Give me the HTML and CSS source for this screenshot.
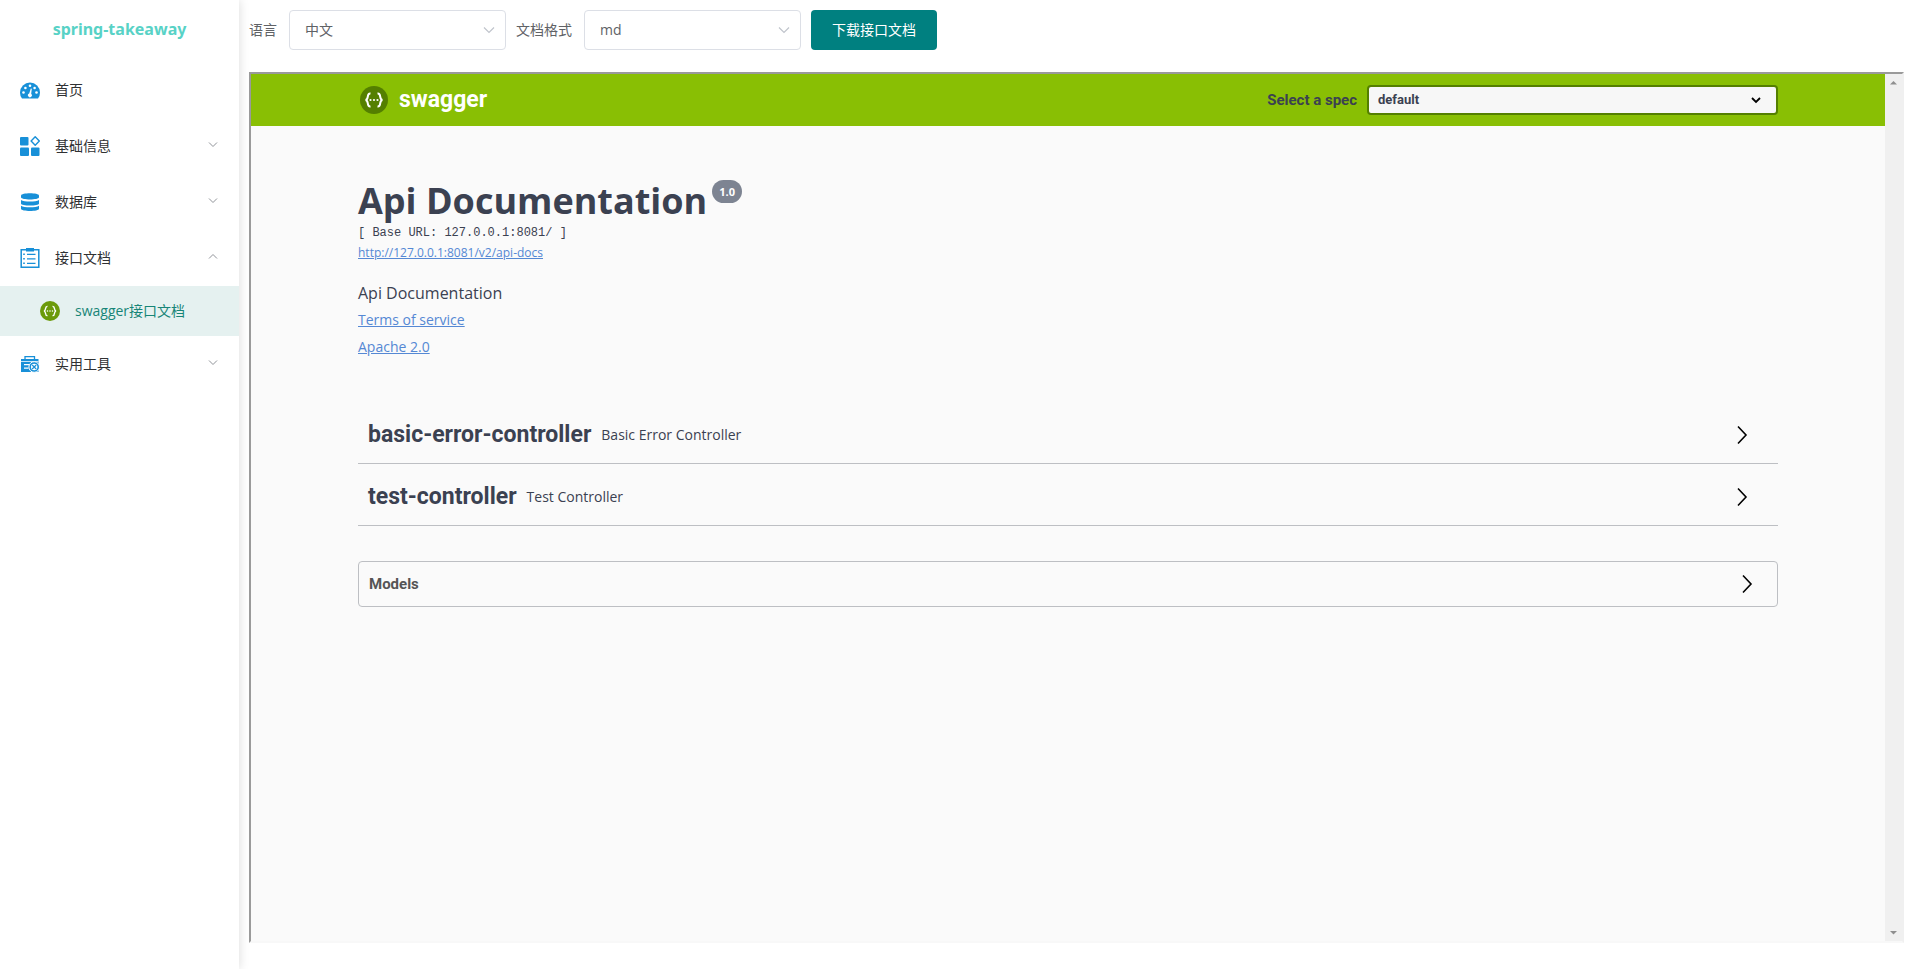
FILE: index.html
```html
<!DOCTYPE html>
<html lang="zh-CN">
<head>
<meta charset="utf-8">
<title>spring-takeaway</title>
<link rel="stylesheet" href="styles.css">
</head>
<body>
<div class="app">
  <aside class="sidebar">
    <h1 class="brand">spring-takeaway</h1>
    <nav class="menu">
      <a class="menu-item" href="#home">
        <svg class="menu-icon" viewBox="0 0 20 20"><path fill="#1890d8" d="M2 18.500Q0 16.500 0 12.500a10 10 0 0 1 20 0q0 4-2 6z"/><g fill="#fff"><circle cx="3.500" cy="12.500" r="1.300"/><circle cx="5.400" cy="8" r="1.300"/><circle cx="10" cy="5.800" r="1.300"/><circle cx="14.600" cy="8" r="1.300"/><circle cx="16.500" cy="12.500" r="1.300"/><path d="m10.800 8.500 1 .2-.6 5a2 2 0 1 1-2-.3z"/></g></svg>
        <span class="menu-text">首页</span>
      </a>
      <a class="menu-item" href="#base">
        <svg class="menu-icon" viewBox="0 0 20 20"><g fill="#1890d8"><rect y="1" width="8.500" height="8.500" rx="1"/><rect y="11.500" width="9" height="8.500" rx="1"/><rect x="11" y="11.500" width="8.500" height="8.500" rx="1"/></g><path fill="none" stroke="#1890d8" stroke-width="1.400" stroke-linejoin="round" d="M15.200 .8 19.300 5l-4.100 4.200L11.100 5z"/></svg>
        <span class="menu-text">基础信息</span>
        <svg class="menu-arrow" viewBox="0 0 12 12"><path d="M2 3.500 6 7.500 10 3.500"/></svg>
      </a>
      <a class="menu-item" href="#database">
        <svg class="menu-icon" viewBox="0 0 20 20"><g fill="#1890d8"><path d="M1 3.500C1 .4 19 .4 19 3.500V5.300c0 2.900-18 2.900-18 0z"/><path d="M1 8c3 2 15 2 18 0v3.500c0 2.800-18 2.800-18 0z"/><path d="M1 13.800c3 2 15 2 18 0v2.900c0 3-18 3-18 0z"/></g></svg>
        <span class="menu-text">数据库</span>
        <svg class="menu-arrow" viewBox="0 0 12 12"><path d="M2 3.500 6 7.500 10 3.500"/></svg>
      </a>
      <a class="menu-item" href="#docs">
        <svg class="menu-icon" viewBox="0 0 20 20"><path fill="none" stroke="#1890d8" stroke-width="1.500" d="M1.200 1.800h17.600v17.400H1.200z"/><path fill="#1890d8" d="M6 0h8v3.500H6zM3.200 5.500h1.600v1.600H3.200zM3.200 10h1.600v1.600H3.200zM3.200 14.500h1.600v1.600H3.200zM7 5.700h8.500v1.200H7zM7 10.200h8.500v1.200H7zM7 14.700h8.500v1.200H7z"/></svg>
        <span class="menu-text">接口文档</span>
        <svg class="menu-arrow" viewBox="0 0 12 12"><path d="M2 7.500 6 3.500 10 7.500"/></svg>
      </a>
      <a class="menu-item menu-item-sub" href="#swagger">
        <svg class="menu-icon" viewBox="0 0 28 28"><circle cx="14" cy="14" r="14" fill="#6b9a0a"/><path class="braces" d="M10.500 7.500C6 7 9.500 13.500 5.500 14c4 .5.500 7 5 6.500M17.500 7.500c4.500-.5 1 6 5 6.500-4 .5-.5 7-5 6.500"/><g fill="#fff"><circle cx="10.500" cy="14" r="1.100"/><circle cx="14" cy="14" r="1.100"/><circle cx="17.500" cy="14" r="1.100"/></g></svg>
        <span class="menu-text">swagger接口文档</span>
      </a>
      <a class="menu-item" href="#tools">
        <svg class="menu-icon" viewBox="0 0 20 20"><path fill="#1890d8" d="M1 5h17.500v13H1z"/><path fill="none" stroke="#1890d8" stroke-width="1.300" d="M5 5V2.700h9.500V5"/><path fill="#fff" d="M1 7h17.500v.8H1zM4 10h5v1.300H4zM4 13.500h4.500v1.300H4z"/><circle cx="14.200" cy="13" r="5.300" fill="#1890d8" stroke="#fff"/><circle cx="14.200" cy="13" r="3.200" fill="#fff"/><path fill="none" stroke="#1890d8" stroke-width="1.200" d="m12.200 11 4 4m0-4-4 4"/></svg>
        <span class="menu-text">实用工具</span>
        <svg class="menu-arrow" viewBox="0 0 12 12"><path d="M2 3.500 6 7.500 10 3.500"/></svg>
      </a>
    </nav>
  </aside>

  <main class="main">
    <form class="toolbar">
      <div class="field">
        <label for="lang">语言</label>
        <div class="picker">
          <select id="lang"><option>中文</option></select>
          <svg class="picker-arrow" viewBox="0 0 14 14"><path d="M2 4.500 7 9.500 12 4.500"/></svg>
        </div>
      </div>
      <div class="field">
        <label for="format">文档格式</label>
        <div class="picker">
          <select id="format"><option>md</option></select>
          <svg class="picker-arrow" viewBox="0 0 14 14"><path d="M2 4.500 7 9.500 12 4.500"/></svg>
        </div>
      </div>
      <button class="download" type="button">下载接口文档</button>
    </form>

    <section class="frame">
      <div class="swagger">
        <header class="topbar">
          <div class="wrap topbar-row">
            <a class="logo" href="#top">
              <svg class="logo-mark" viewBox="0 0 28 28"><circle cx="14" cy="14" r="14" fill="#547f00"/><path class="braces" d="M10.500 7.500C6 7 9.500 13.500 5.500 14c4 .5.500 7 5 6.500M17.500 7.500c4.500-.5 1 6 5 6.500-4 .5-.5 7-5 6.500"/><g fill="#fff"><circle cx="10.500" cy="14" r="1.100"/><circle cx="14" cy="14" r="1.100"/><circle cx="17.500" cy="14" r="1.100"/></g></svg>
              <span>swagger</span>
            </a>
            <div class="spec">
              <label for="spec">Select a spec</label>
              <div class="spec-picker">
                <select id="spec"><option>default</option></select>
                <svg class="spec-arrow" viewBox="0 0 12 12"><path d="M2 4 6 8 10 4"/></svg>
              </div>
            </div>
          </div>
        </header>
        <div class="wrap">
          <div class="info">
            <h2 class="title">Api Documentation<span class="version">1.0</span></h2>
            <p class="base-url">[ Base URL: 127.0.0.1:8081/ ]</p>
            <a class="docs-link" href="#api-docs">http://127.0.0.1:8081/v2/api-docs</a>
            <p class="description">Api Documentation</p>
            <a class="info-link" href="#terms">Terms of service</a>
            <a class="info-link" href="#license">Apache 2.0</a>
          </div>
          <button class="tag" type="button">
            <span class="tag-name">basic-error-controller</span>
            <span class="tag-note">Basic Error Controller</span>
            <svg class="chevron" viewBox="0 0 20 20"><path d="M6 1.500 14 10 6 18.500"/></svg>
          </button>
          <button class="tag" type="button">
            <span class="tag-name">test-controller</span>
            <span class="tag-note">Test Controller</span>
            <svg class="chevron" viewBox="0 0 20 20"><path d="M6 1.500 14 10 6 18.500"/></svg>
          </button>
          <button class="models" type="button">
            <span>Models</span>
            <svg class="chevron" viewBox="0 0 20 20"><path d="M6 1.500 14 10 6 18.500"/></svg>
          </button>
        </div>
      </div>
      <div class="scroll" aria-hidden="true">
        <svg viewBox="0 0 17 17"><path d="M5 10.500 8.500 7l3.500 3.500z"/></svg>
        <svg viewBox="0 0 17 17"><path d="M5 7h7l-3.500 3.500z"/></svg>
      </div>
    </section>
  </main>
</div>
</body>
</html>
```
FILE: styles.css
```css
* { box-sizing: border-box; }
body {
  margin: 0;
  background: #fff;
  color: #606266;
  font: 14px/20px "Open Sans", "Noto Sans CJK SC", sans-serif;
}
button, select { font: inherit; color: inherit; margin: 0; }
h1, h2, p { margin: 0; }
.app { display: flex; min-height: 100vh; }

.sidebar {
  flex: none;
  width: 239px;
  background: #fff;
  box-shadow: 0 0 10px rgba(0, 0, 0, .15);
}
.brand {
  padding: 18px 0;
  margin-bottom: 3px;
  color: #58d2c6;
  font: 700 16px/23px "Noto Sans", sans-serif;
  text-align: center;
}
.menu-item {
  display: flex;
  align-items: center;
  height: 56px;
  padding: 0 20px;
  color: #303133;
  text-decoration: none;
}
.menu-item-sub {
  height: 50px;
  padding-left: 40px;
  background: #e5f1f0;
  color: #178577;
}
.menu-icon { flex: none; width: 20px; height: 20px; margin-right: 15px; }
.menu-text { flex: 1; }
.menu-arrow { width: 12px; height: 12px; margin-bottom: 3px; }
.menu-arrow path { fill: none; stroke: #909399; }
.braces { fill: none; stroke: #fff; stroke-width: 2; }

.main {
  flex: 1;
  display: flex;
  flex-direction: column;
  gap: 22px;
  padding: 10px 16px 26px 10px;
}
.toolbar { display: flex; gap: 10px; }
.field { display: flex; align-items: center; gap: 12px; }
.picker { position: relative; width: 217px; }
.picker select {
  display: block;
  width: 100%;
  height: 40px;
  padding: 0 30px 0 15px;
  border: 1px solid #dcdfe6;
  border-radius: 4px;
  background: #fff;
  appearance: none;
}
.picker-arrow { position: absolute; right: 10px; top: 13px; width: 14px; height: 14px; }
.picker-arrow path { fill: none; stroke: #c0c4cc; stroke-width: 1.200; }
.download {
  height: 40px;
  padding: 0 21px;
  border: 0;
  border-radius: 4px;
  background: #008080;
  color: #fff;
}

.frame {
  flex: 1;
  display: flex;
  border: 2px solid #f0f0f0;
  border-top-color: #9a9a9a;
  border-left-color: #9a9a9a;
  border-bottom-color: #f8f8f8;
  background: #fafafa;
}
.swagger { flex: 1; color: #3b4151; }
.scroll {
  width: 17px;
  display: flex;
  flex-direction: column;
  justify-content: space-between;
  background: #f0f0f0;
}
.scroll svg { width: 17px; height: 17px; fill: #8f8f8f; }
.wrap { max-width: 1460px; margin: 0 auto; padding: 0 20px; }
.topbar { background: #89bf04; }
.topbar-row { display: flex; align-items: center; justify-content: space-between; height: 52px; }
.logo {
  display: flex;
  align-items: center;
  gap: 11px;
  padding-left: 2px;
  color: #fff;
  font: 700 23px/30px Roboto, sans-serif;
  text-decoration: none;
}
.logo-mark { width: 28px; height: 28px; }
.spec { display: flex; align-items: center; gap: 10px; font: 700 15px/20px Roboto, sans-serif; }
.spec-picker { position: relative; width: 411px; }
.spec-picker select {
  display: block;
  width: 100%;
  height: 30px;
  padding: 0 40px 0 9px;
  border: 2px solid #547f00;
  border-radius: 4px;
  background: #f7f7f7;
  font-size: 13px;
  appearance: none;
}
.spec-arrow { position: absolute; right: 16px; top: 9px; width: 12px; height: 12px; }
.spec-arrow path { fill: none; stroke: #000; stroke-width: 1.800; }

.info { display: flex; flex-direction: column; align-items: flex-start; padding: 50px 0 43px; }
.title { display: flex; align-items: flex-start; gap: 5px; font-size: 36px; line-height: 49px; }
.version {
  margin-top: 4px;
  padding: 0 7px;
  border-radius: 12px;
  background: #7d8492;
  color: #fff;
  font-size: 11px;
  line-height: 23px;
}
.base-url { font: 12px/16px "Liberation Mono", monospace; }
.docs-link { margin: 4px 0 20px; color: #5588d4; font-size: 12px; line-height: 16px; }
.description { margin-bottom: 5px; font-size: 16px; line-height: 24px; }
.info-link { margin-bottom: 7px; color: #5588d4; }
.tag {
  display: flex;
  align-items: center;
  gap: 10px;
  width: 100%;
  height: 57px;
  margin-bottom: 5px;
  padding: 0 26px 0 10px;
  border: 0;
  border-bottom: 1px solid #bdbfc3;
  background: none;
}
.tag-name { font: 700 23px/30px Roboto, sans-serif; }
.tag-note { flex: 1; text-align: left; }
.chevron { width: 20px; height: 20px; }
.chevron path { fill: none; stroke: #000; stroke-width: 1.600; }
.models {
  display: flex;
  align-items: center;
  justify-content: space-between;
  width: 100%;
  height: 46px;
  margin-top: 35px;
  padding: 0 20px 0 10px;
  border: 1px solid #bdbfc3;
  border-radius: 4px;
  background: none;
  color: #555;
  font: 700 15px/20px Roboto, sans-serif;
}
```
